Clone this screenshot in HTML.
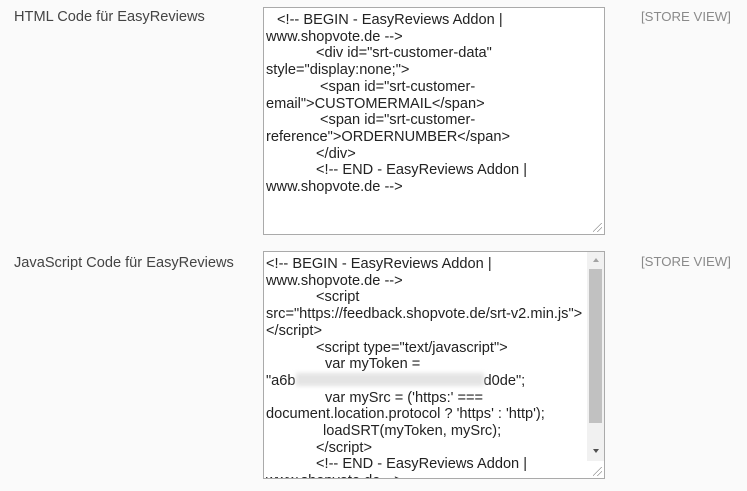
<!DOCTYPE html>
<html><head><meta charset="utf-8"><style>
html,body{margin:0;padding:0;width:747px;height:491px;background:#fafafa;overflow:hidden;font-family:"Liberation Sans",Arial,sans-serif;}
.lbl{position:absolute;left:14px;font-size:14.6px;color:#444;}
.sv{position:absolute;left:641px;font-size:13.2px;color:#8a8a8a;}
.ta{position:absolute;left:263px;width:340px;background:#fff;border:1px solid #aaa;overflow:hidden;}
.l{position:absolute;font-size:14.6px;color:#222;white-space:pre;line-height:16px;}
.grip{position:absolute;right:2px;bottom:2px;width:9px;height:9px;background:linear-gradient(135deg,transparent 45%,#999 45%,#999 52%,transparent 52%,transparent 70%,#999 70%,#999 77%,transparent 77%);}
</style></head><body>
<div class="lbl" style="top:9px">HTML Code für EasyReviews</div>
<div class="sv" style="top:9px">[STORE VIEW]</div>
<div class="ta" style="top:7px;height:226px">
<div class="l" style="left:13px;top:4px">&lt;!-- BEGIN - EasyReviews Addon |</div>
<div class="l" style="left:2px;top:20.7px">www.shopvote.de --&gt;</div>
<div class="l" style="left:52px;top:37.4px">&lt;div id="srt-customer-data"</div>
<div class="l" style="left:2px;top:54.1px">style="display:none;"&gt;</div>
<div class="l" style="left:56px;top:70.8px">&lt;span id="srt-customer-</div>
<div class="l" style="left:2px;top:87.5px">email"&gt;CUSTOMERMAIL&lt;/span&gt;</div>
<div class="l" style="left:56px;top:104.2px">&lt;span id="srt-customer-</div>
<div class="l" style="left:2px;top:120.9px">reference"&gt;ORDERNUMBER&lt;/span&gt;</div>
<div class="l" style="left:52px;top:137.6px">&lt;/div&gt;</div>
<div class="l" style="left:52px;top:154.3px">&lt;!-- END - EasyReviews Addon |</div>
<div class="l" style="left:2px;top:171px">www.shopvote.de --&gt;</div>
<div class="grip"></div>
</div>
<div class="lbl" style="top:255px">JavaScript Code für EasyReviews</div>
<div class="sv" style="top:254px">[STORE VIEW]</div>
<div class="ta" style="top:251px;height:226px">
<div class="l" style="left:2px;top:4px">&lt;!-- BEGIN - EasyReviews Addon |</div>
<div class="l" style="left:2px;top:20.7px">www.shopvote.de --&gt;</div>
<div class="l" style="left:52px;top:37.4px">&lt;script</div>
<div class="l" style="left:2px;top:54.1px">src="https://feedback.shopvote.de/srt-v2.min.js"&gt;</div>
<div class="l" style="left:2px;top:70.8px">&lt;/script&gt;</div>
<div class="l" style="left:52px;top:87.5px">&lt;script type="text/javascript"&gt;</div>
<div class="l" style="left:61px;top:104.2px">var myToken =</div>
<div class="l" style="left:2px;top:120.9px">"a6b<span style="display:inline-block;width:188px;height:13px;background:#e4e4e4;vertical-align:-1px;filter:blur(2px)"></span>d0de";</div>
<div class="l" style="left:61px;top:137.6px">var mySrc = ('https:' ===</div>
<div class="l" style="left:2px;top:154.3px">document.location.protocol ? 'https' : 'http');</div>
<div class="l" style="left:59px;top:171px">loadSRT(myToken, mySrc);</div>
<div class="l" style="left:52px;top:187.7px">&lt;/script&gt;</div>
<div class="l" style="left:52px;top:204.4px">&lt;!-- END - EasyReviews Addon |</div>
<div class="l" style="left:2px;top:221.1px">www.shopvote.de --&gt;</div>
<div style="position:absolute;right:0;top:0;width:17px;height:209px;background:#f1f1f1"></div>
<div style="position:absolute;right:2px;top:17px;width:13px;height:154px;background:#c1c1c1"></div>
<div style="position:absolute;right:5px;top:6px;width:0;height:0;border-left:3.5px solid transparent;border-right:3.5px solid transparent;border-bottom:4px solid #a3a3a3"></div>
<div style="position:absolute;right:5px;top:197px;width:0;height:0;border-left:3.5px solid transparent;border-right:3.5px solid transparent;border-top:4px solid #505050"></div>
<div style="position:absolute;right:0;bottom:0;width:17px;height:17px;background:#fff"></div>
<div class="grip"></div>
</div>
</body></html>
